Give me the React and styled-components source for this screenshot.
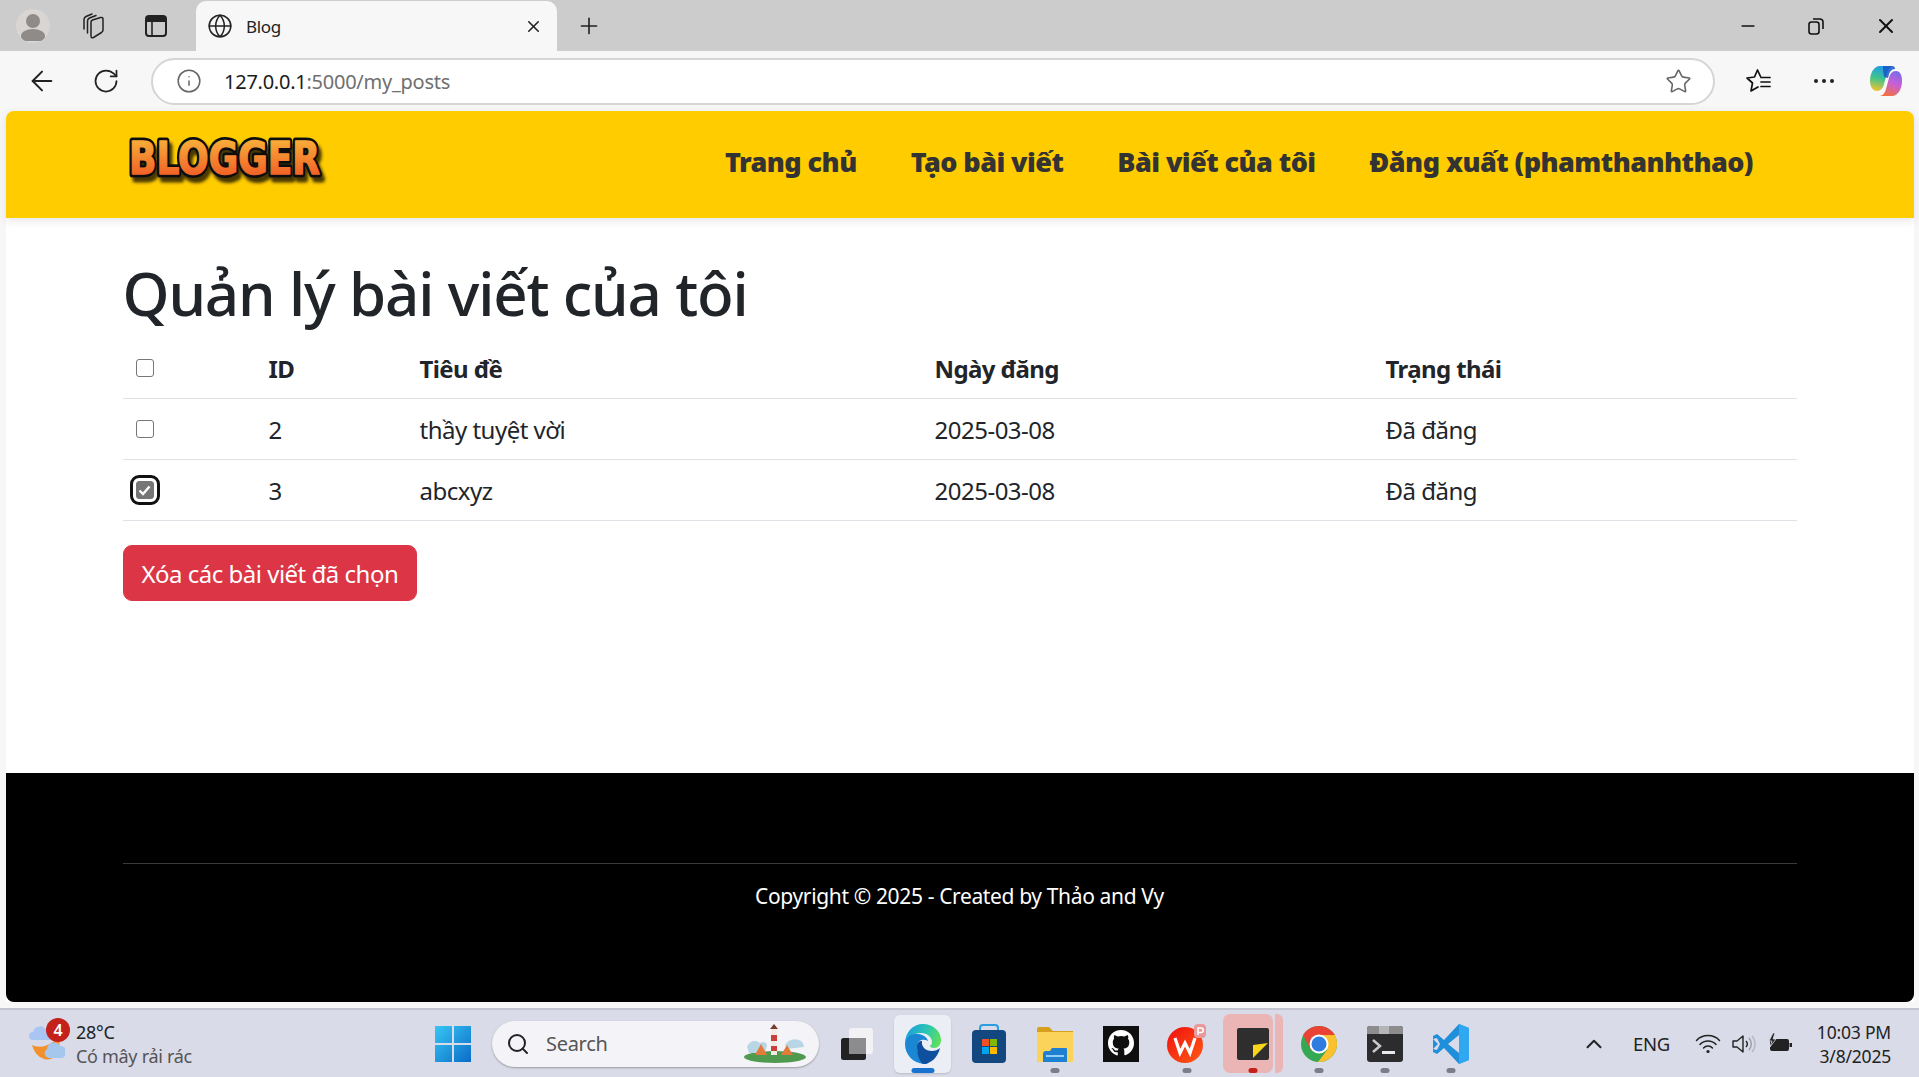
import React from 'react'
import styled, { createGlobalStyle } from 'styled-components'
import { ArrowLeft, ChevronUp, Globe, Info, Minus, Plus, RotateCw, Search, Star, X } from 'lucide-react'

const GlobalStyle = createGlobalStyle`
  html, body {
    margin: 0;
    height: 100%;
    overflow: hidden;
  }
  * {
    box-sizing: border-box;
  }
  body {
    font-family: 'Noto Sans', 'Open Sans', sans-serif;
    color: #212529;
  }
`

const Screen = styled.div`
  width: 1919px;
  height: 1077px;
  display: flex;
  flex-direction: column;
  background: #f7f7f7;
`

const TabStrip = styled.div`
  height: 51px;
  flex: none;
  background: #cccccc;
  display: flex;
  align-items: center;
  padding-left: 16px;
`

const StripButton = styled.div`
  width: ${(p) => p.$w || 62}px;
  height: 51px;
  flex: none;
  display: flex;
  align-items: center;
  justify-content: center;
  color: #222;
`

const Avatar = styled.div`
  width: 34px;
  height: 34px;
  border-radius: 50%;
  background: #d9d5d2;
  display: flex;
  align-items: center;
  justify-content: center;
  overflow: hidden;
`

const Tab = styled.div`
  width: 361px;
  height: 50px;
  margin: 1px 0 0 18px;
  flex: none;
  background: #f7f7f7;
  border-radius: 10px 10px 0 0;
  display: flex;
  align-items: center;
  padding: 0 14px 0 11px;
  gap: 13px;
  font-size: 17px;
  color: #222;
`

const TabTitle = styled.span`
  flex: 1;
  letter-spacing: -0.3px;
`

const WindowButtons = styled.div`
  margin-left: auto;
  display: flex;
  align-items: center;
  gap: 50px;
  padding-right: 21px;
  color: #111;
`

const Toolbar = styled.div`
  height: 60px;
  flex: none;
  display: flex;
  align-items: center;
  padding-left: 26px;
  color: #222;
`

const ToolIcon = styled.div`
  width: ${(p) => p.$w || 66}px;
  flex: none;
  display: flex;
  align-items: center;
`

const Address = styled.div`
  width: 1564px;
  height: 47px;
  margin: 0 31px 0 -9px;
  flex: none;
  background: #fff;
  border: 2px solid #d5d5d5;
  border-radius: 24px;
  display: flex;
  align-items: center;
  padding: 0 21px 0 23px;
  font-size: 20px;
  letter-spacing: -0.25px;
`

const UrlHost = styled.span`
  margin-left: 22px;
  color: #1b1b1b;
`

const UrlRest = styled.span`
  color: #6f6f6f;
  flex: 1;
`

const Viewport = styled.div`
  flex: 1;
  min-height: 0;
  margin: 0 5px 0 6px;
  display: flex;
  flex-direction: column;
  background: #fff;
  border-radius: 8px 8px 0 0;
`

const Nav = styled.nav`
  height: 107px;
  flex: none;
  background: #ffcc00;
  border-radius: 8px 8px 0 0;
  box-shadow: 0 3px 10px rgba(0, 0, 0, 0.1);
  display: flex;
  align-items: center;
  justify-content: space-between;
  padding: 0 161px 0 119px;
`

const Logo = styled.svg`
  width: 204px;
  height: 54px;
  margin-top: -11px;
  display: block;
`

const NavLinks = styled.div`
  display: flex;
  gap: 54px;
  margin-top: -6px;
`

const NavLink = styled.a`
  font-size: 27px;
  font-weight: 900;
  letter-spacing: -0.55px;
  color: #333;
  text-decoration: none;
  white-space: nowrap;
`

const Main = styled.main`
  flex: 1;
  padding: 39px 117.5px 0 116.5px;
`

const Title = styled.h1`
  margin: 0 0 9px;
  font-size: 60px;
  line-height: 72px;
  font-weight: 500;
  color: #212529;
  letter-spacing: -1.15px;
`

const Table = styled.table`
  width: 100%;
  table-layout: fixed;
  border-collapse: collapse;
  margin-bottom: 24px;
  font-size: 24px;
  line-height: 36px;
`

const HeadCell = styled.th`
  padding: 13px 12px 11px 13px;
  text-align: left;
  font-weight: 700;
  color: #212529;
  border-bottom: 1px solid #dee2e6;
  width: ${(p) => p.$w}px;
  letter-spacing: -0.6px;
`

const Cell = styled.td`
  padding: 13px 12px 11px 13px;
  border-bottom: 1px solid #dee2e6;
  color: #212529;
  letter-spacing: -0.5px;
`

const CheckCell = styled.div`
  width: 18px;
  height: 18px;
  margin: -2px 0 0 0;
  border: 1.5px solid #767676;
  border-radius: 3px;
  background: ${(p) => (p.$checked ? '#767676' : '#fff')};
  display: flex;
  align-items: center;
  justify-content: center;
  outline: ${(p) => (p.$focus ? '3px solid #111' : 'none')};
  outline-offset: 3px;
`

const DangerButton = styled.button`
  height: 56px;
  padding: 0 18px;
  background: #dc3545;
  border: 1px solid #dc3545;
  border-radius: 9px;
  color: #fff;
  font-family: inherit;
  font-size: 24px;
  letter-spacing: -0.5px;
`

const Footer = styled.footer`
  height: 229px;
  flex: none;
  background: #000;
  border-radius: 0 0 8px 8px;
  padding: 90px 117.5px 0 116.5px;
  color: #fff;
`

const FooterRule = styled.div`
  height: 1px;
  background: #3b3b3b;
`

const Copyright = styled.p`
  margin: 18px 0 0;
  text-align: center;
  font-size: 21px;
  line-height: 28px;
  letter-spacing: -0.36px;
`

const Taskbar = styled.div`
  height: 69px;
  flex: none;
  margin-top: 6px;
  background: #d9dbe8;
  border-top: 2px solid #c2c4cf;
  display: flex;
  align-items: center;
  padding-left: 29px;
`

const Weather = styled.div`
  width: 406px;
  flex: none;
  display: flex;
  align-items: center;
  gap: 11px;
  position: relative;
`

const Badge = styled.span`
  position: absolute;
  left: 17px;
  top: -2px;
  width: 24px;
  height: 24px;
  border-radius: 50%;
  background: #c4211b;
  color: #fff;
  font-size: 16px;
  font-weight: 600;
  line-height: 24px;
  text-align: center;
`

const WeatherText = styled.div`
  font-size: 18px;
  line-height: 24px;
  letter-spacing: -0.3px;
  color: #222;
`

const Muted = styled.div`
  color: #555;
`

const Centre = styled.div`
  display: flex;
  align-items: center;
`

const SearchBox = styled.div`
  width: 327px;
  height: 46px;
  margin: 0 4.5px 0 21px;
  flex: none;
  border-radius: 23px;
  background: #f4f4f8;
  box-shadow: 0 1px 2px rgba(0, 0, 0, 0.3);
  display: flex;
  align-items: center;
  padding: 0 10px 0 14px;
  gap: 16px;
  font-size: 20px;
  color: #555;
  letter-spacing: -0.3px;
`

const SearchLabel = styled.span`
  flex: 1;
`

const AppSlot = styled.div`
  width: 66px;
  height: 58px;
  flex: none;
  display: flex;
  align-items: center;
  justify-content: center;
  position: relative;
`

const EdgeTile = styled.div`
  width: 57px;
  height: 58px;
  border-radius: 6px;
  background: #eceef6;
  box-shadow: 0 1px 2px rgba(0, 0, 0, 0.15);
  display: flex;
  align-items: center;
  justify-content: center;
`

const NotesTile = styled.div`
  width: 50px;
  height: 59px;
  flex: none;
  border-radius: 7px;
  background: #ebb5b5;
  display: flex;
  align-items: center;
  justify-content: flex-end;
  padding-right: 4px;
`

const NotesSliver = styled.div`
  width: 8px;
  height: 59px;
  flex: none;
  margin-left: 2px;
  border-radius: 0 6px 6px 0;
  background: #ebb5b5;
`

const AppDot = styled.span`
  position: absolute;
  bottom: 0;
  left: 50%;
  transform: translateX(-50%);
  width: ${(p) => p.$w || 9}px;
  height: 5px;
  border-radius: 3px;
  background: ${(p) => p.$color || '#7b7e88'};
`

const Tray = styled.div`
  margin-left: auto;
  display: flex;
  align-items: center;
  padding-right: 28px;
  color: #222;
`

const TrayLang = styled.span`
  font-size: 18.5px;
  margin: 0 25px 0 26px;
  letter-spacing: -0.3px;
`

const TrayIcons = styled.div`
  display: flex;
  align-items: center;
  gap: 11px;
  margin-right: 24px;
`

const Clock = styled.div`
  text-align: right;
  font-size: 17.5px;
  line-height: 24px;
  letter-spacing: -0.2px;
`

const CollectionsIcon = () => (
  <svg width="24" height="26" viewBox="0 0 24 26" fill="none" stroke="#222" strokeWidth="1.5" strokeLinecap="round">
    <path d="M11 9q0-1.500 1.500-2l8-2.500q2.500-.5 2.500 1.500v11q0 1.500-1.500 2.500l-8 5q-2.500 1-2.500-1.500z" />
    <path d="M7.500 20V8q0-2 2-3l6.500-2.500" />
    <path d="M4 16V6.500q0-2 2-3L12 1" />
  </svg>
)

const VerticalTabsIcon = () => (
  <svg width="22" height="22" viewBox="0 0 22 22" fill="none">
    <rect x="1" y="1" width="20" height="20" rx="3" stroke="#222" strokeWidth="2" />
    <path d="M1 3.500A2.500 2.500 0 0 1 3.500 1h15A2.500 2.500 0 0 1 21 3.500V7H1z" fill="#222" />
    <path d="M7 7v14" stroke="#222" strokeWidth="1.6" />
  </svg>
)

const RestoreIcon = () => (
  <svg width="16" height="18" viewBox="0 0 16 18" fill="none" stroke="#111" strokeWidth="1.6">
    <rect x="1" y="5" width="10" height="12" rx="2.5" />
    <path d="M5 2h6.500A3 3 0 0 1 15 5v7" />
  </svg>
)

const FavoritesIcon = () => (
  <svg width="26" height="26" viewBox="0 0 26 26" fill="none" stroke="#111" strokeWidth="1.7" strokeLinejoin="round" strokeLinecap="round">
    <path d="M14.500 8.500 11.500 2 8.500 9 1 10l5.500 5-1.500 8 7-4" />
    <path d="M15 9.500h9M15 14h9M15 18.500h9" />
  </svg>
)

const CopilotIcon = () => (
  <svg width="34" height="34" viewBox="0 0 34 34">
    <defs>
      <linearGradient id="copA" x1="0.5" y1="0" x2="0.3" y2="1">
        <stop offset="0" stopColor="#1f9be8" />
        <stop offset="0.5" stopColor="#3fc48d" />
        <stop offset="1" stopColor="#f2c230" />
      </linearGradient>
      <linearGradient id="copB" x1="0.7" y1="0" x2="0.3" y2="1">
        <stop offset="0" stopColor="#7b6be6" />
        <stop offset="0.45" stopColor="#c75fd8" />
        <stop offset="1" stopColor="#f5703c" />
      </linearGradient>
    </defs>
    <path d="M11 2h13c-3 .5-5 3-6 7l-3 11c-1 4-3 7-7 7-4 0-7-4-7-10C1 9 5 2 11 2z" fill="url(#copA)" />
    <path d="M23 32H11c3-.5 5-3 6-7l3-11c1-4 3-7 7-7 4 0 6 4 6 10 0 8-4 15-10 15z" fill="url(#copB)" />
    <path d="M14 2h9c2 0 3 1 3 3-3 0-5 2-6 5l-1 4-4-1-1-7c0-2 0-4 0-4z" fill="#1556c8" opacity="0.85" />
  </svg>
)

const WeatherIcon = () => (
  <svg width="36" height="37" viewBox="0 0 36 37">
    <path d="M4 15a4 4 0 0 1 0-8 7 7 0 0 1 13-2 5 5 0 0 1 4 10z" fill="#a9c6f2" />
    <path d="M3 20c6 3 14 2 21-3l7-3-1 9c-2 9-8 13-15 11C9 32 5 27 3 20z" fill="#f2912b" />
    <path d="M19 33a5 5 0 0 1-1-9 7 7 0 0 1 13-3 6 6 0 0 1 1 12z" fill="#a5c7ee" />
  </svg>
)

const BeachIcon = () => (
  <svg width="70" height="42" viewBox="0 0 70 42">
    <ellipse cx="36" cy="34" rx="31" ry="6" fill="#4f9a4f" />
    <path d="M8 24c2-6 8-8 13-4 3-2 6-1 7 2l-2 8H10z" fill="#b9d6e6" />
    <path d="M46 22c3-5 8-7 14-5 3 1 5 4 5 7l-17 2z" fill="#b9d6e6" />
    <path d="M16 32l6-11 6 11z" fill="#e07b3c" />
    <path d="M42 32l6-10 6 10z" fill="#e07b3c" />
    <rect x="32" y="6" width="6" height="26" fill="#f0ece4" />
    <rect x="32" y="12" width="6" height="6" fill="#c8403a" />
    <rect x="32" y="23" width="6" height="5" fill="#c8403a" />
    <path d="M31 6h8l-4-5z" fill="#7a3b2e" />
  </svg>
)

const WindowsIcon = () => (
  <svg width="36" height="36" viewBox="0 0 36 36">
    <defs>
      <linearGradient id="win" x1="0" y1="0" x2="1" y2="1">
        <stop offset="0" stopColor="#38c6f4" />
        <stop offset="1" stopColor="#0a6cc8" />
      </linearGradient>
    </defs>
    <path d="M0 0h17v17H0zM19 0h17v17H19zM0 19h17v17H0zM19 19h17v17H19z" fill="url(#win)" />
  </svg>
)

const TaskViewIcon = () => (
  <svg width="34" height="34" viewBox="0 0 34 34">
    <rect x="9" y="1" width="24" height="26" rx="3" fill="#f2f2f4" />
    <rect x="1" y="11" width="25" height="22" rx="2.500" fill="#222" />
    <rect x="9" y="11" width="17" height="16" fill="#8c8c8e" />
  </svg>
)

const EdgeIcon = () => (
  <svg width="36" height="40" viewBox="0 0 36 40">
    <defs>
      <linearGradient id="edgeA" x1="0" y1="0.3" x2="1" y2="0.6">
        <stop offset="0" stopColor="#1b9de0" />
        <stop offset="0.55" stopColor="#2cc7b0" />
        <stop offset="1" stopColor="#5fe05a" />
      </linearGradient>
    </defs>
    <path d="M0 20C0 8 8 0 18 0c10 0 18 7 18 16 0 5-3 8-7 8-2 0-4-1-4-2 1-1 2-2 2-4 0-5-5-9-11-9C8 9 0 13 0 20z" fill="url(#edgeA)" />
    <path d="M0 20c0-7 7-11 13-10 5 .5 9 3 10 7-5-3-11-1-11 6 0 8 6 14 11 17C10 41 0 32 0 20z" fill="#1a86d4" />
    <path d="M12 22c0-3 2-5 5-5-1 5 3 10 10 10 3 0 6-1 8-3-2 9-9 16-17 16-4-3-6-10-6-18z" fill="#0e4f9e" />
  </svg>
)

const StoreIcon = () => (
  <svg width="36" height="40" viewBox="0 0 36 40">
    <path d="M9 9V4a3 3 0 0 1 3-3h12a3 3 0 0 1 3 3v5" fill="none" stroke="#2a9ee0" strokeWidth="2" />
    <rect x="1" y="6" width="34" height="33" rx="4" fill="#12477f" />
    <rect x="11" y="15" width="7" height="7" fill="#f25022" />
    <rect x="19" y="15" width="7" height="7" fill="#7fba00" />
    <rect x="11" y="23" width="7" height="7" fill="#00a4ef" />
    <rect x="19" y="23" width="7" height="7" fill="#ffb900" />
  </svg>
)

const FilesIcon = () => (
  <svg width="36" height="36" viewBox="0 0 36 36">
    <path d="M0 3a2 2 0 0 1 2-2h10l4 4h20v6H0z" fill="#d6a01e" />
    <rect x="0" y="6" width="36" height="30" fill="#fbd35a" />
    <path d="M6 28a3 3 0 0 1 3-3h4l2-3h14a1 1 0 0 1 1 1v13H6z" fill="#1f7fd0" />
    <rect x="9" y="29" width="18" height="2" fill="#8fd0f4" />
  </svg>
)

const GithubIcon = () => (
  <svg width="36" height="36" viewBox="0 0 36 36">
    <rect width="36" height="36" fill="#0f0f10" />
    <path d="M18 4C10.500 4 5 9.800 5 17c0 5.800 3.700 10.700 8.900 12.400.7.100.9-.3.900-.6v-2.600c-3.600.8-4.400-1.600-4.400-1.600-.6-1.500-1.400-1.900-1.400-1.900-1.200-.8.100-.8.100-.8 1.300.1 2 1.300 2 1.300 1.200 2 3 1.400 3.800 1.100.1-.8.400-1.400.8-1.700-2.900-.3-5.900-1.400-5.900-6.400 0-1.400.5-2.600 1.300-3.500-.1-.3-.6-1.700.1-3.500 0 0 1.100-.3 3.600 1.300a12.400 12.400 0 0 1 6.500 0c2.500-1.700 3.600-1.300 3.600-1.300.7 1.800.3 3.100.1 3.500.8.900 1.300 2.100 1.300 3.500 0 5-3 6.100-5.900 6.400.5.400.9 1.200.9 2.400v3.600c0 .3.200.7.900.6C27.300 27.700 31 22.800 31 17c0-7.200-5.500-13-13-13z" fill="#fff" />
  </svg>
)

const WpsIcon = () => (
  <svg width="40" height="40" viewBox="0 0 40 40">
    <defs>
      <linearGradient id="wps" x1="0" y1="0" x2="1" y2="1">
        <stop offset="0" stopColor="#f01010" />
        <stop offset="1" stopColor="#ff5a14" />
      </linearGradient>
    </defs>
    <circle cx="18" cy="21" r="18" fill="url(#wps)" />
    <path d="M8 14l5 15 5-10 5 10 5-15" fill="none" stroke="#fff" strokeWidth="3.200" />
    <rect x="27" y="0" width="12" height="14" rx="4" fill="#e89a9a" />
    <path d="M31 11V4h3a2 2 0 0 1 0 4.500h-3" fill="none" stroke="#fff" strokeWidth="1.500" />
  </svg>
)

const NotesIcon = () => (
  <svg width="32" height="32" viewBox="0 0 32 32">
    <rect width="32" height="32" rx="2" fill="#2e2e2e" />
    <path d="M16 17 31 15 16 30z" fill="#f7d51d" />
  </svg>
)

const ChromeIcon = () => (
  <svg width="36" height="36" viewBox="0 0 36 36">
    <circle cx="18" cy="18" r="18" fill="#34a853" />
    <path d="M18 0C11 0 5 4 2 9l8 15 8-15h16C31 4 25 0 18 0z" fill="#ea4335" />
    <path d="M34 9H18l8 15-9 12h1c10 0 18-8 18-18 0-3-.7-6-2-9z" fill="#fbc02d" />
    <circle cx="18" cy="18" r="9.500" fill="#fff" />
    <circle cx="18" cy="18" r="7.500" fill="#2f7de1" />
  </svg>
)

const TerminalIcon = () => (
  <svg width="36" height="36" viewBox="0 0 36 36">
    <rect width="36" height="36" rx="3" fill="#2c2c2e" />
    <path d="M0 3a3 3 0 0 1 3-3h30a3 3 0 0 1 3 3v5H0z" fill="#8d8d90" />
    <rect x="12" y="0" width="10" height="8" fill="#b5b5b8" />
    <path d="m6 14 7 6-7 6" fill="none" stroke="#c9c9cb" strokeWidth="2.500" />
    <rect x="15" y="25" width="13" height="3" fill="#e8e8ea" />
  </svg>
)

const VsCodeIcon = () => (
  <svg width="36" height="40" viewBox="0 0 36 40">
    <path d="M26 0 11 16 4 10 0 12v16l4 2 7-6 15 16 10-4V4z" fill="#1f8fdc" />
    <path d="M26 0 36 4v32l-10 4z" fill="#30a8f0" />
    <path d="M26 11 15 20l11 9z" fill="#d9dbe8" />
    <path d="M0 15l4-1 3 6-3 6-4-1 5-5z" fill="#d9dbe8" />
  </svg>
)

const WifiIcon = () => (
  <svg width="26" height="22" viewBox="0 0 26 22" fill="none" stroke="#222" strokeWidth="1.500" strokeLinecap="round">
    <path d="M1.500 7.500a16 16 0 0 1 23 0" />
    <path d="M5 11.500a11 11 0 0 1 16 0" />
    <path d="M8.500 15a6 6 0 0 1 9 0" />
    <circle cx="13" cy="18.500" r="1.600" fill="#222" stroke="none" />
  </svg>
)

const SpeakerIcon = () => (
  <svg width="24" height="22" viewBox="0 0 24 22" fill="none" stroke="#222" strokeWidth="1.400">
    <path d="M1 8h4l6-5v16l-6-5H1z" strokeLinejoin="round" />
    <path d="M14 8a4.500 4.500 0 0 1 0 6" />
    <path d="M17 5a9 9 0 0 1 0 12" stroke="#9a9aa0" />
    <path d="M20 3a12 12 0 0 1 0 16" stroke="#b8b8c0" />
  </svg>
)

const BatteryIcon = () => (
  <svg width="26" height="22" viewBox="0 0 26 22">
    <rect x="3" y="6" width="19" height="12" rx="2" fill="#222" />
    <rect x="22.500" y="10" width="2.500" height="4" fill="#222" />
    <path d="M6 0 2 8h3l-2 6 6-8H6l2-6z" fill="#222" stroke="#d9dbe8" strokeWidth="0.800" />
  </svg>
)

const CheckMark = () => (
  <svg width="13" height="11" viewBox="0 0 13 11" fill="none" stroke="#fff" strokeWidth="2.400">
    <path d="m1.500 5.500 3.500 3.500 6.500-7.500" />
  </svg>
)

const posts = [
  { id: 2, title: 'thầy tuyệt vời', date: '2025-03-08', status: 'Đã đăng' },
  { id: 3, title: 'abcxyz', date: '2025-03-08', status: 'Đã đăng', checked: true },
]

const apps = [
  { key: 'task', icon: <TaskViewIcon /> },
  { key: 'edge', icon: <EdgeTile><EdgeIcon /></EdgeTile>, dot: '#1a73d0', dotW: 23 },
  { key: 'store', icon: <StoreIcon /> },
  { key: 'files', icon: <FilesIcon />, dot: '#7b7e88' },
  { key: 'github', icon: <GithubIcon /> },
  { key: 'wps', icon: <WpsIcon />, dot: '#7b7e88' },
  {
    key: 'notes',
    icon: (
      <>
        <NotesTile><NotesIcon /></NotesTile>
        <NotesSliver />
      </>
    ),
    dot: '#c4211b',
  },
  { key: 'chrome', icon: <ChromeIcon />, dot: '#7b7e88' },
  { key: 'terminal', icon: <TerminalIcon />, dot: '#7b7e88' },
  { key: 'vscode', icon: <VsCodeIcon />, dot: '#7b7e88' },
]

const App = () => {
  return (
    <Screen>
      <GlobalStyle />
      <TabStrip>
        <StripButton $w={34}>
          <Avatar>
            <svg width="28" height="30" viewBox="0 0 28 30" fill="#8e8b88">
              <circle cx="14" cy="10" r="7" />
              <ellipse cx="14" cy="25" rx="12" ry="7" />
            </svg>
          </Avatar>
        </StripButton>
        <StripButton $w={84}><CollectionsIcon /></StripButton>
        <StripButton $w={44}><VerticalTabsIcon /></StripButton>
        <Tab>
          <Globe size={26} strokeWidth={1.4} />
          <TabTitle>Blog</TabTitle>
          <X size={19} strokeWidth={2} />
        </Tab>
        <StripButton $w={64}><Plus size={26} strokeWidth={1.5} /></StripButton>
        <WindowButtons>
          <Minus size={20} strokeWidth={2} />
          <RestoreIcon />
          <X size={24} strokeWidth={2} />
        </WindowButtons>
      </TabStrip>

      <Toolbar>
        <ToolIcon $w={66}><ArrowLeft size={32} strokeWidth={1.5} /></ToolIcon>
        <ToolIcon $w={68}><RotateCw size={28} strokeWidth={1.5} /></ToolIcon>
        <Address>
          <Info size={26} strokeWidth={1.4} color="#666" />
          <UrlHost>127.0.0.1</UrlHost>
          <UrlRest>:5000/my_posts</UrlRest>
          <Star size={27} strokeWidth={1.4} color="#666" />
        </Address>
        <ToolIcon $w={67}><FavoritesIcon /></ToolIcon>
        <ToolIcon $w={56}>
          <svg width="22" height="6" viewBox="0 0 22 6" fill="#222">
            <circle cx="3" cy="3" r="2" />
            <circle cx="11" cy="3" r="2" />
            <circle cx="19" cy="3" r="2" />
          </svg>
        </ToolIcon>
        <ToolIcon $w={36}><CopilotIcon /></ToolIcon>
      </Toolbar>

      <Viewport>
        <Nav>
          <Logo viewBox="0 0 204 54">
            <defs>
              <linearGradient id="logoFill" x1="0" y1="0" x2="0" y2="1">
                <stop offset="0.1" stopColor="#f8b13a" />
                <stop offset="1" stopColor="#f04e23" />
              </linearGradient>
              <filter id="logoShadow" x="-5%" y="-10%" width="115%" height="140%">
                <feDropShadow dx="3" dy="5" stdDeviation="1.500" floodColor="#2a1c00" floodOpacity="0.85" />
              </filter>
              <text
                id="logoText"
                x="4"
                y="42"
                textLength="191"
                lengthAdjust="spacingAndGlyphs"
                fontFamily="'DejaVu Sans', sans-serif"
                fontWeight="700"
                fontSize="44"
                strokeLinejoin="round"
              >
                BLOGGER
              </text>
            </defs>
            <use href="#logoText" fill="#111" stroke="#111" strokeWidth="7" filter="url(#logoShadow)" />
            <use href="#logoText" fill="url(#logoFill)" stroke="url(#logoFill)" strokeWidth="1.500" />
          </Logo>
          <NavLinks>
            <NavLink href="#">Trang chủ</NavLink>
            <NavLink href="#">Tạo bài viết</NavLink>
            <NavLink href="#">Bài viết của tôi</NavLink>
            <NavLink href="#">Đăng xuất (phamthanhthao)</NavLink>
          </NavLinks>
        </Nav>

        <Main>
          <Title>Quản lý bài viết của tôi</Title>
          <Table>
            <thead>
              <tr>
                <HeadCell $w={133}><CheckCell /></HeadCell>
                <HeadCell $w={151}>ID</HeadCell>
                <HeadCell $w={515}>Tiêu đề</HeadCell>
                <HeadCell $w={451}>Ngày đăng</HeadCell>
                <HeadCell>Trạng thái</HeadCell>
              </tr>
            </thead>
            <tbody>
              {posts.map((post) => (
                <tr key={post.id}>
                  <Cell>
                    <CheckCell $checked={post.checked} $focus={post.checked}>
                      {post.checked && <CheckMark />}
                    </CheckCell>
                  </Cell>
                  <Cell>{post.id}</Cell>
                  <Cell>{post.title}</Cell>
                  <Cell>{post.date}</Cell>
                  <Cell>{post.status}</Cell>
                </tr>
              ))}
            </tbody>
          </Table>
          <DangerButton type="button">Xóa các bài viết đã chọn</DangerButton>
        </Main>

        <Footer>
          <FooterRule />
          <Copyright>Copyright © 2025 - Created by Thảo and Vy</Copyright>
        </Footer>
      </Viewport>

      <Taskbar>
        <Weather>
          <WeatherIcon />
          <Badge>4</Badge>
          <WeatherText>
            28°C
            <Muted>Có mây rải rác</Muted>
          </WeatherText>
        </Weather>
        <Centre>
          <WindowsIcon />
          <SearchBox>
            <Search size={24} strokeWidth={2} color="#222" />
            <SearchLabel>Search</SearchLabel>
            <BeachIcon />
          </SearchBox>
          {apps.map((app) => (
            <AppSlot key={app.key}>
              {app.icon}
              {app.dot && <AppDot $color={app.dot} $w={app.dotW} />}
            </AppSlot>
          ))}
        </Centre>
        <Tray>
          <ChevronUp size={26} strokeWidth={1.8} />
          <TrayLang>ENG</TrayLang>
          <TrayIcons>
            <WifiIcon />
            <SpeakerIcon />
            <BatteryIcon />
          </TrayIcons>
          <Clock>
            10:03 PM
            <div>3/8/2025</div>
          </Clock>
        </Tray>
      </Taskbar>
    </Screen>
  )
}

export default App
